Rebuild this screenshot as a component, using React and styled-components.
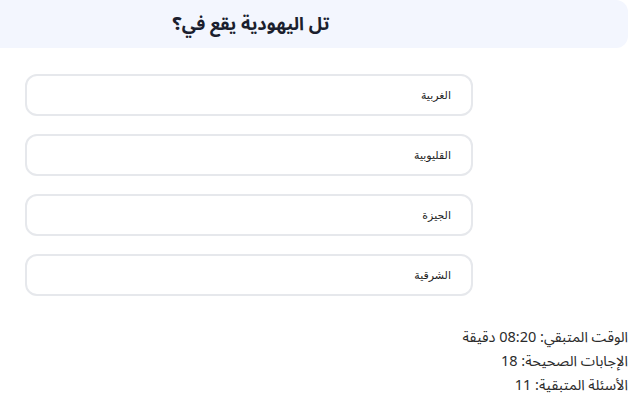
import React from 'react';
import styled, { createGlobalStyle } from 'styled-components';

const GlobalStyle = createGlobalStyle`
  html, body {
    margin: 0;
    padding: 0;
    background: #fff;
  }
  body {
    font-family: "Noto Sans Arabic", "Noto Sans", sans-serif;
  }
`;

const Page = styled.div`
  direction: rtl;
  width: 628px;
`;

const Header = styled.header`
  display: flex;
  justify-content: flex-end;
  align-items: center;
  height: 48px;
  background: #f3f6fe;
  border-top-right-radius: 12px;
  border-bottom-right-radius: 12px;
`;

const Title = styled.h2`
  margin: 0;
  width: 502px;
  text-align: center;
  font-size: 18px;
  font-weight: 700;
  color: #1b1f2e;
`;

const Options = styled.div`
  display: flex;
  flex-direction: column;
  gap: 18px;
  width: 448px;
  margin: 26px 155px 0 0;
`;

const Option = styled.button`
  direction: rtl;
  display: flex;
  align-items: center;
  height: 42px;
  padding: 0 20px;
  background: #fff;
  border: 2px solid #e6e8ec;
  border-radius: 12px;
  font-family: "Liberation Sans", "DejaVu Sans", sans-serif;
  font-size: 11px;
  color: #1f1f1f;
  cursor: pointer;
`;

const Stats = styled.div`
  margin-top: 30px;
  display: flex;
  flex-direction: column;
`;

const StatLine = styled.div`
  font-size: 14.5px;
  line-height: 24px;
  color: #2b2b2b;
`;

const options = ['الغربية', 'القليوبية', 'الجيزة', 'الشرقية'];

export default function App() {
  return (
    <Page>
      <GlobalStyle />
      <Header>
        <Title>تل اليهودية يقع في؟</Title>
      </Header>
      <Options>
        {options.map((o) => (
          <Option key={o}>{o}</Option>
        ))}
      </Options>
      <Stats>
        <StatLine>الوقت المتبقي: 08:20 دقيقة</StatLine>
        <StatLine>الإجابات الصحيحة: 18</StatLine>
        <StatLine>الأسئلة المتبقية: 11</StatLine>
      </Stats>
    </Page>
  );
}
